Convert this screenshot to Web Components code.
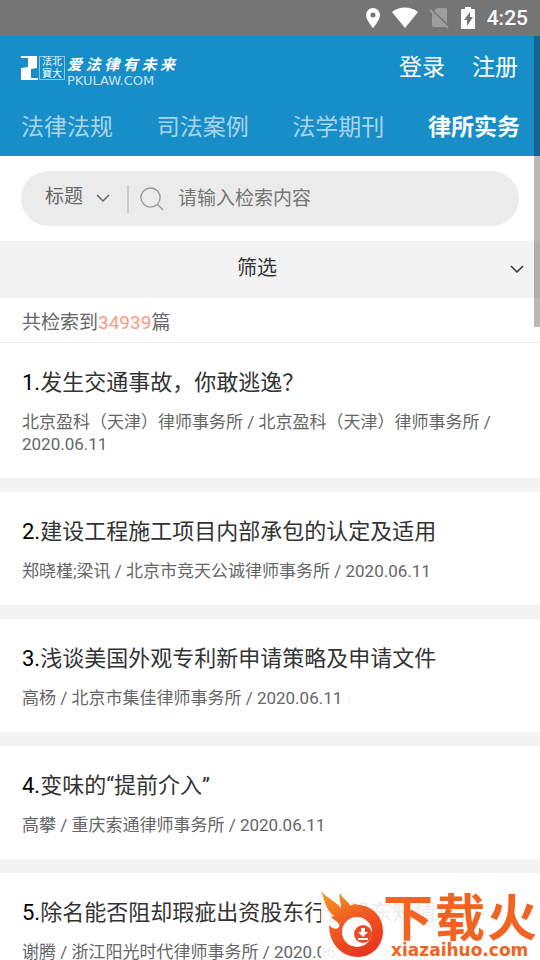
<!DOCTYPE html>
<html lang="zh-CN">
<head>
<meta charset="utf-8">
<meta name="viewport" content="width=device-width, initial-scale=1">
<title>律所实务</title>
<style>
  body {
    margin: 0;
    background: #fff;
    font-family: Roboto, "Noto Sans CJK SC", sans-serif;
  }
</style>
</head>
<body>
<law-app></law-app>

<script>
const define = (name, html, setup) => {
  const template = document.createElement("template");
  template.innerHTML = html;

  customElements.define(name, class extends HTMLElement {
    constructor() {
      super();
      this.attachShadow({ mode: "open" }).appendChild(template.content.cloneNode(true));
    }

    connectedCallback() {
      if (setup) setup(this, this.shadowRoot);
    }
  });
};

define("status-bar", `
  <style>
    :host {
      display: flex;
      align-items: center;
      justify-content: flex-end;
      gap: 11px;
      height: 36px;
      padding-right: 12px;
      background: #757575;
      color: #fff;
      font-size: 21px;
      font-weight: 500;
      line-height: 36px;
    }
    svg { display: block; }
  </style>
  <svg width="16" height="22" viewBox="0 0 16 22"><path fill="#fff" fill-rule="evenodd" d="M8 1a7 7 0 0 0-7 7c0 5 7 13 7 13s7-8 7-13a7 7 0 0 0-7-7zm0 4.500a2.500 2.500 0 1 1 0 5 2.500 2.500 0 0 1 0-5z"/></svg>
  <svg width="26" height="22" viewBox="0 0 26 22"><path fill="#fff" d="M0 5C7-1 19-1 26 5L13 21z"/></svg>
  <svg width="20" height="22" viewBox="0 0 20 22"><path fill="#9e9e9e" d="M8 1h8q2 0 2 2v13L5 4zM3 6l14 14H5q-2 0-2-2z"/><path stroke="#9e9e9e" stroke-width="2" d="M1 3l18 18"/></svg>
  <svg width="16" height="22" viewBox="0 0 16 22"><path fill="#fff" d="M5 0h6v2h3q1 0 1 1v18q0 1-1 1H2q-1 0-1-1V3q0-1 1-1h3z"/><path fill="#757575" d="M10 5v5h3l-6 9v-6H4z"/></svg>
  <span>4:25</span>
`);

define("site-logo", `
  <style>
    :host { display: block; color: #fff; }
    a { display: flex; color: inherit; text-decoration: none; }
    svg { display: block; }
    .seal {
      width: 26px;
      height: 24px;
      margin: 0 2px 0 1px;
      box-shadow: inset 0 0 0 1px rgba(255, 255, 255, .5);
      font: 10px/12px "Liberation Sans", "Noto Sans CJK SC", sans-serif;
      text-align: center;
    }
    .seal span { display: block; }
    .words { width: 108px; }
    .slogan {
      font: italic bold 15px/17px "Liberation Sans", "Noto Sans CJK SC", sans-serif;
      text-align-last: justify;
    }
    .domain { font: 13px/15px "DejaVu Sans", sans-serif; height: 7px; opacity: .75; }
  </style>
  <a href="#">
    <svg width="17" height="24" viewBox="0 0 17 24"><path fill="#fff" d="M0 0h16v12l-6 1v9h7v2H0V12l7-1V2H0z"/></svg>
    <div class="seal"><span>法北</span><span>寶大</span></div>
    <div class="words">
      <div class="slogan">爱法律有未来</div>
      <div class="domain">PKULAW.COM</div>
    </div>
  </a>
`);

define("site-header", `
  <style>
    :host { display: block; padding: 0 20px 0 21px; background: #178ec7; color: #fff; }
    .top { display: flex; align-items: center; height: 64px; font-size: 23px; line-height: 32px; }
    site-logo { margin-right: auto; }
    a { color: inherit; text-decoration: none; }
    .top > a { margin: 0 2px 0 25px; }
    nav { display: flex; justify-content: space-between; height: 56px; font-size: 23px; line-height: 56px; }
    nav a { color: rgba(255, 255, 255, .65); }
    nav a[aria-current] { color: #fff; font-weight: bold; }
  </style>
  <div class="top">
    <site-logo></site-logo>
    <a href="#login">登录</a>
    <a href="#register">注册</a>
  </div>
  <nav>
    <a href="#law">法律法规</a>
    <a href="#case">司法案例</a>
    <a href="#journal">法学期刊</a>
    <a href="#firm" aria-current="page">律所实务</a>
  </nav>
`);

define("search-bar", `
  <style>
    :host { display: block; padding: 15px 21px; }
    form {
      display: flex;
      align-items: center;
      height: 55px;
      padding: 0 24px;
      border-radius: 28px;
      background: #ebebeb;
    }
    .field { display: grid; grid-template-columns: 1fr 14px; align-items: center; width: 65px; }
    select, .field svg { grid-row: 1; }
    select {
      grid-column: 1 / 3;
      appearance: none;
      padding: 0 0 3px;
      border: 0;
      outline: 0;
      background: none;
      color: #666;
      font: inherit;
      font-size: 19px;
      line-height: 28px;
    }
    .field svg { grid-column: 2; pointer-events: none; }
    .line { width: 2px; height: 28px; margin: 0 11px 0 17px; background: #ccc; }
    svg { display: block; }
    input {
      flex: 1;
      min-width: 0;
      height: 32px;
      margin-left: 14px;
      padding: 0;
      border: 0;
      outline: 0;
      background: none;
      color: #333;
      font: inherit;
      font-size: 19px;
    }
    input::placeholder { color: #757575; }
  </style>
  <form>
    <label class="field">
      <select aria-label="检索字段"><option>标题</option></select>
      <svg width="14" height="9" viewBox="0 0 14 9"><path fill="none" stroke="#666" stroke-width="1.500" d="M1 1l6 6 6-6"/></svg>
    </label>
    <span class="line"></span>
    <svg width="24" height="24" viewBox="0 0 25 25"><g fill="none" stroke="#999" stroke-width="1.400"><circle cx="11" cy="11" r="10"/><path d="M18 18l6 6"/></g></svg>
    <input type="search" aria-label="检索内容" placeholder="请输入检索内容">
  </form>
`);

define("filter-bar", `
  <style>
    :host { display: block; background: #f3f3f3; }
    button {
      display: grid;
      grid-template-columns: 1fr 14px;
      align-items: center;
      width: 100%;
      height: 57px;
      padding: 0 16px 0 4px;
      border: 0;
      background: none;
      color: #333;
      font: inherit;
      font-size: 20px;
      line-height: 28px;
    }
    span { padding-bottom: 4px; }
  </style>
  <button type="button">
    <span>筛选</span>
    <svg width="14" height="9" viewBox="0 0 14 9"><path fill="none" stroke="#333" stroke-width="1.500" d="M1 1l6 6 6-6"/></svg>
  </button>
`);

define("result-count", `
  <style>
    :host {
      display: block;
      padding: 11px 22px 5px;
      border-bottom: 1px solid #eee;
      color: #666;
      font-size: 19px;
      line-height: 28px;
    }
    ::slotted(b) { color: #ff9980; font-weight: normal; }
  </style>
  <slot></slot>
`);

define("result-item", `
  <style>
    :host { display: block; padding: 24px 22px 23px; border-bottom: 14px solid #f3f3f3; }
    h2 { margin: 0 0 12px; font-size: 22px; font-weight: normal; line-height: 32px; }
    h2 a { color: #333; text-decoration: none; }
    .no { color: #000; }
    p { margin: 0; color: #666; font-size: 17px; line-height: 22px; }
  </style>
  <h2><a href="#"><span class="no"></span><slot></slot></a></h2>
  <p></p>
`, (el, root) => {
  root.querySelector(".no").textContent = el.getAttribute("no") + ".";
  root.querySelector("p").textContent = el.getAttribute("meta");
});

define("flame-mark", `
  <style>
    :host {
      display: flex;
      width: 219px;
      height: 70px;
      background: rgba(255, 255, 255, .9);
      color: #f26322;
    }
    svg { display: block; flex: none; }
    .words { width: 154px; margin-left: -2px; white-space: nowrap; }
    .name {
      height: 50px;
      font: bold 50px/58px "Liberation Sans", "Noto Sans CJK SC", sans-serif;
      text-align-last: justify;
    }
    .site { margin-left: 8px; font: bold 17px/20px "DejaVu Sans", sans-serif; }
  </style>
  <svg width="64" height="70" viewBox="0 0 64 70">
    <defs>
      <linearGradient id="fire" x1="0" y1="0" x2=".5" y2="1">
        <stop offset="0" stop-color="#f9a51f"/>
        <stop offset=".45" stop-color="#f26322"/>
        <stop offset="1" stop-color="#e8391f"/>
      </linearGradient>
    </defs>
    <path fill="url(#fire)" d="M0 0C4 7 11 9 16 14c2 2 3 3 4 4 1-5-3-9-1-15 3 7 9 8 10 13 3-2 6-2 9-1 14 1 24 12 24 26 0 15-11 26-25 26C20 67 8 53 8 35c3 4 8 5 10 2 2-4-4-6-8-10l3-1C4 19 4 11 0 0z"/>
    <circle cx="36" cy="42" r="15" fill="#fff"/>
    <circle cx="42" cy="44" r="9" fill="#ed4a23"/>
    <path fill="#fff" d="M40 38h4v4h3l-5 5-5-5h3zM37 48h10v2H37z"/>
  </svg>
  <div class="words">
    <div class="name">下载火</div>
    <div class="site">xiazaihuo.com</div>
  </div>
`);

define("law-app", `
  <style>
    :host { display: flex; flex-direction: column; height: 100vh; position: relative; overflow: hidden; }
    status-bar { flex: none; }
    main { flex: 1; min-height: 0; overflow-y: auto; scrollbar-width: none; }
    /* scroll thumb and watermark float over the page */
    .thumb { position: absolute; top: 36px; right: 0; width: 6px; height: 291px; background: rgba(0, 0, 0, .28); }
    flame-mark { position: absolute; right: 0; bottom: 0; }
  </style>
  <status-bar></status-bar>
  <main>
    <site-header></site-header>
    <search-bar></search-bar>
    <filter-bar></filter-bar>
    <result-count>共检索到<b>34939</b>篇</result-count>
    <result-item no="1" meta="北京盈科（天津）律师事务所 / 北京盈科（天津）律师事务所 / 2020.06.11">发生交通事故，你敢逃逸？</result-item>
    <result-item no="2" meta="郑晓槿;梁讯 / 北京市竞天公诚律师事务所 / 2020.06.11">建设工程施工项目内部承包的认定及适用</result-item>
    <result-item no="3" meta="高杨 / 北京市集佳律师事务所 / 2020.06.11">浅谈美国外观专利新申请策略及申请文件</result-item>
    <result-item no="4" meta="高攀 / 重庆索通律师事务所 / 2020.06.11">变味的“提前介入”</result-item>
    <result-item no="5" meta="谢腾 / 浙江阳光时代律师事务所 / 2020.06.11">除名能否阻却瑕疵出资股东行使股东知情权？</result-item>
  </main>
  <div class="thumb"></div>
  <flame-mark></flame-mark>
`);
</script>
</body>
</html>
